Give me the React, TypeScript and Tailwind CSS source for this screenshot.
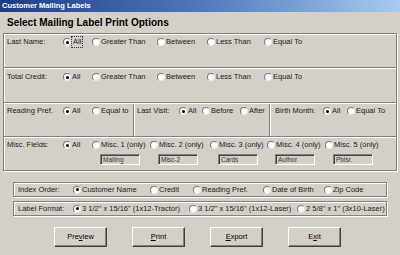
import React from "react";

const Radio = ({ checked = false }: { checked?: boolean }) => (
  <span className="inline-flex h-[8px] w-[8px] shrink-0 items-center justify-center rounded-full border border-b-[#e8e8e8] border-l-[#7a7a7a] border-r-[#e8e8e8] border-t-[#7a7a7a] bg-white">
    {checked && <span className="h-[3px] w-[3px] rounded-full bg-black"></span>}
  </span>
);

interface OptProps {
  label: React.ReactNode;
  checked?: boolean;
  w?: string;
  focus?: boolean;
}

const Opt = ({ label, checked, w = "", focus }: OptProps) => (
  <span className={`flex shrink-0 items-center ${w}`}>
    <Radio checked={checked} />
    {focus ? (
      <span className="border border-dotted border-[#333] px-[1px] leading-[10px]">
        {label}
      </span>
    ) : (
      <span className="ml-[1px] whitespace-nowrap">{label}</span>
    )}
  </span>
);

const Sep = () => <div className="h-[2px] border-b border-t border-b-white border-t-[#808080]"></div>;

const Field = ({ text }: { text: string }) => (
  <div className="ml-[8px] mt-[3px] flex h-[11px] w-[40px] items-center border border-b-white border-l-[#808080] border-r-white border-t-[#808080] bg-[#d4d0c8] pl-[2px] text-[6.5px] leading-[9px] text-[#333] shadow-[inset_1px_1px_0_#404040]">
    {text}
  </div>
);

const Button = ({ children }: { children: React.ReactNode }) => (
  <button className="flex h-[20px] w-[53px] items-center justify-center border border-b-[#404040] border-l-white border-r-[#404040] border-t-white bg-[#d4d0c8] text-[7.5px] text-black shadow-[inset_-1px_-1px_0_#808080]">
    {children}
  </button>
);

export default function App() {
  return (
    <div className="flex h-[255px] w-[400px] flex-col overflow-hidden bg-[#d4d0c8] font-['Liberation_Sans',Arial,sans-serif] text-[7.5px] leading-[12px] text-[#1a1a1a]">
      <div className="flex h-[12px] shrink-0 items-center bg-gradient-to-r from-[#1c3d86] via-[#5078bc] to-[#a8ccf0] pl-[2px] text-[7.5px] font-bold text-white">
        Customer Mailing Labels
      </div>
      <div className="flex h-[21px] shrink-0 items-center pl-[7px] text-[10px] font-bold text-black">
        Select Mailing Label Print Options
      </div>

      <div className="mx-[3px] flex h-[138px] shrink-0 flex-col border border-[#808080] shadow-[1px_1px_0_#fff,inset_1px_1px_0_#fff]">
        <div className="flex h-[33px] items-start pl-[3px] pt-[2px]">
          <span className="w-[56px] shrink-0">Last Name:</span>
          <Opt label="All" checked focus w="w-[29px]" />
          <Opt label="Greater Than" w="w-[65px]" />
          <Opt label="Between" w="w-[50px]" />
          <Opt label="Less Than" w="w-[57px]" />
          <Opt label="Equal To" />
        </div>
        <Sep />
        <div className="flex h-[33px] items-start pl-[3px] pt-[2px]">
          <span className="w-[56px] shrink-0">Total Credit:</span>
          <Opt label="All" checked w="w-[29px]" />
          <Opt label="Greater Than" w="w-[65px]" />
          <Opt label="Between" w="w-[50px]" />
          <Opt label="Less Than" w="w-[57px]" />
          <Opt label="Equal To" />
        </div>
        <Sep />
        <div className="flex h-[32px]">
          <div className="flex w-[129px] shrink-0 items-start pl-[3px] pt-[1px]">
            <span className="w-[56px] shrink-0">Reading Pref.</span>
            <Opt label="All" checked w="w-[29px]" />
            <Opt label="Equal to" />
          </div>
          <div className="flex w-[136px] shrink-0 items-start border-l border-[#808080] pl-[3px] pt-[1px] shadow-[inset_1px_0_0_#fff]">
            <span className="w-[42px] shrink-0">Last Visit:</span>
            <Opt label="All" checked w="w-[23px]" />
            <Opt label="Before" w="w-[38px]" />
            <Opt label="After" />
          </div>
          <div className="flex flex-1 items-start border-l border-[#808080] pl-[5px] pt-[1px] shadow-[inset_1px_0_0_#fff]">
            <span className="w-[48px] shrink-0">Birth Month:</span>
            <Opt label="All" checked w="w-[24px]" />
            <Opt label="Equal To" />
          </div>
        </div>
        <Sep />
        <div className="flex h-[32px] items-start pl-[3px] pt-[1px]">
          <span className="w-[56px] shrink-0">Misc. Fields:</span>
          <Opt label="All" checked w="w-[29px]" />
          <div className="flex w-[58px] shrink-0 flex-col">
            <Opt label="Misc. 1 (only)" />
            <Field text="Mailing" />
          </div>
          <div className="flex w-[60px] shrink-0 flex-col">
            <Opt label="Misc. 2 (only)" />
            <Field text="Misc-2" />
          </div>
          <div className="flex w-[57px] shrink-0 flex-col">
            <Opt label="Misc. 3 (only)" />
            <Field text="Cards" />
          </div>
          <div className="flex w-[58px] shrink-0 flex-col">
            <Opt label="Misc. 4 (only)" />
            <Field text="Author" />
          </div>
          <div className="flex shrink-0 flex-col">
            <Opt label="Misc. 5 (only)" />
            <Field text="Pblsr." />
          </div>
        </div>
      </div>

      <div className="mx-[13px] mt-[11px] flex h-[15px] shrink-0 items-center border border-[#808080] pl-[4px] shadow-[1px_1px_0_#fff,inset_1px_1px_0_#fff]">
        <span className="w-[55px] shrink-0">Index Order:</span>
        <Opt label="Customer Name" checked w="w-[77px]" />
        <Opt label="Credit" w="w-[43px]" />
        <Opt label="Reading Pref." w="w-[70px]" />
        <Opt label="Date of Birth" w="w-[61px]" />
        <Opt label="Zip Code" />
      </div>
      <div className="mx-[13px] mt-[4px] flex h-[15px] shrink-0 items-center border border-[#808080] pl-[4px] shadow-[1px_1px_0_#fff,inset_1px_1px_0_#fff]">
        <span className="w-[55px] shrink-0">Label Format:</span>
        <Opt label={'3 1/2" x 15/16" (1x12-Tractor)'} checked w="w-[116px]" />
        <Opt label={'3 1/2" x 15/16" (1x12-Laser)'} w="w-[108px]" />
        <Opt label={'2 5/8" x 1" (3x10-Laser)'} />
      </div>

      <div className="ml-[54px] mt-[11px] flex shrink-0 gap-[25px]">
        <Button>
          Pre<u>v</u>iew
        </Button>
        <Button>
          <u>P</u>rint
        </Button>
        <Button>
          <u>E</u>xport
        </Button>
        <Button>
          E<u>x</u>it
        </Button>
      </div>
    </div>
  );
}
